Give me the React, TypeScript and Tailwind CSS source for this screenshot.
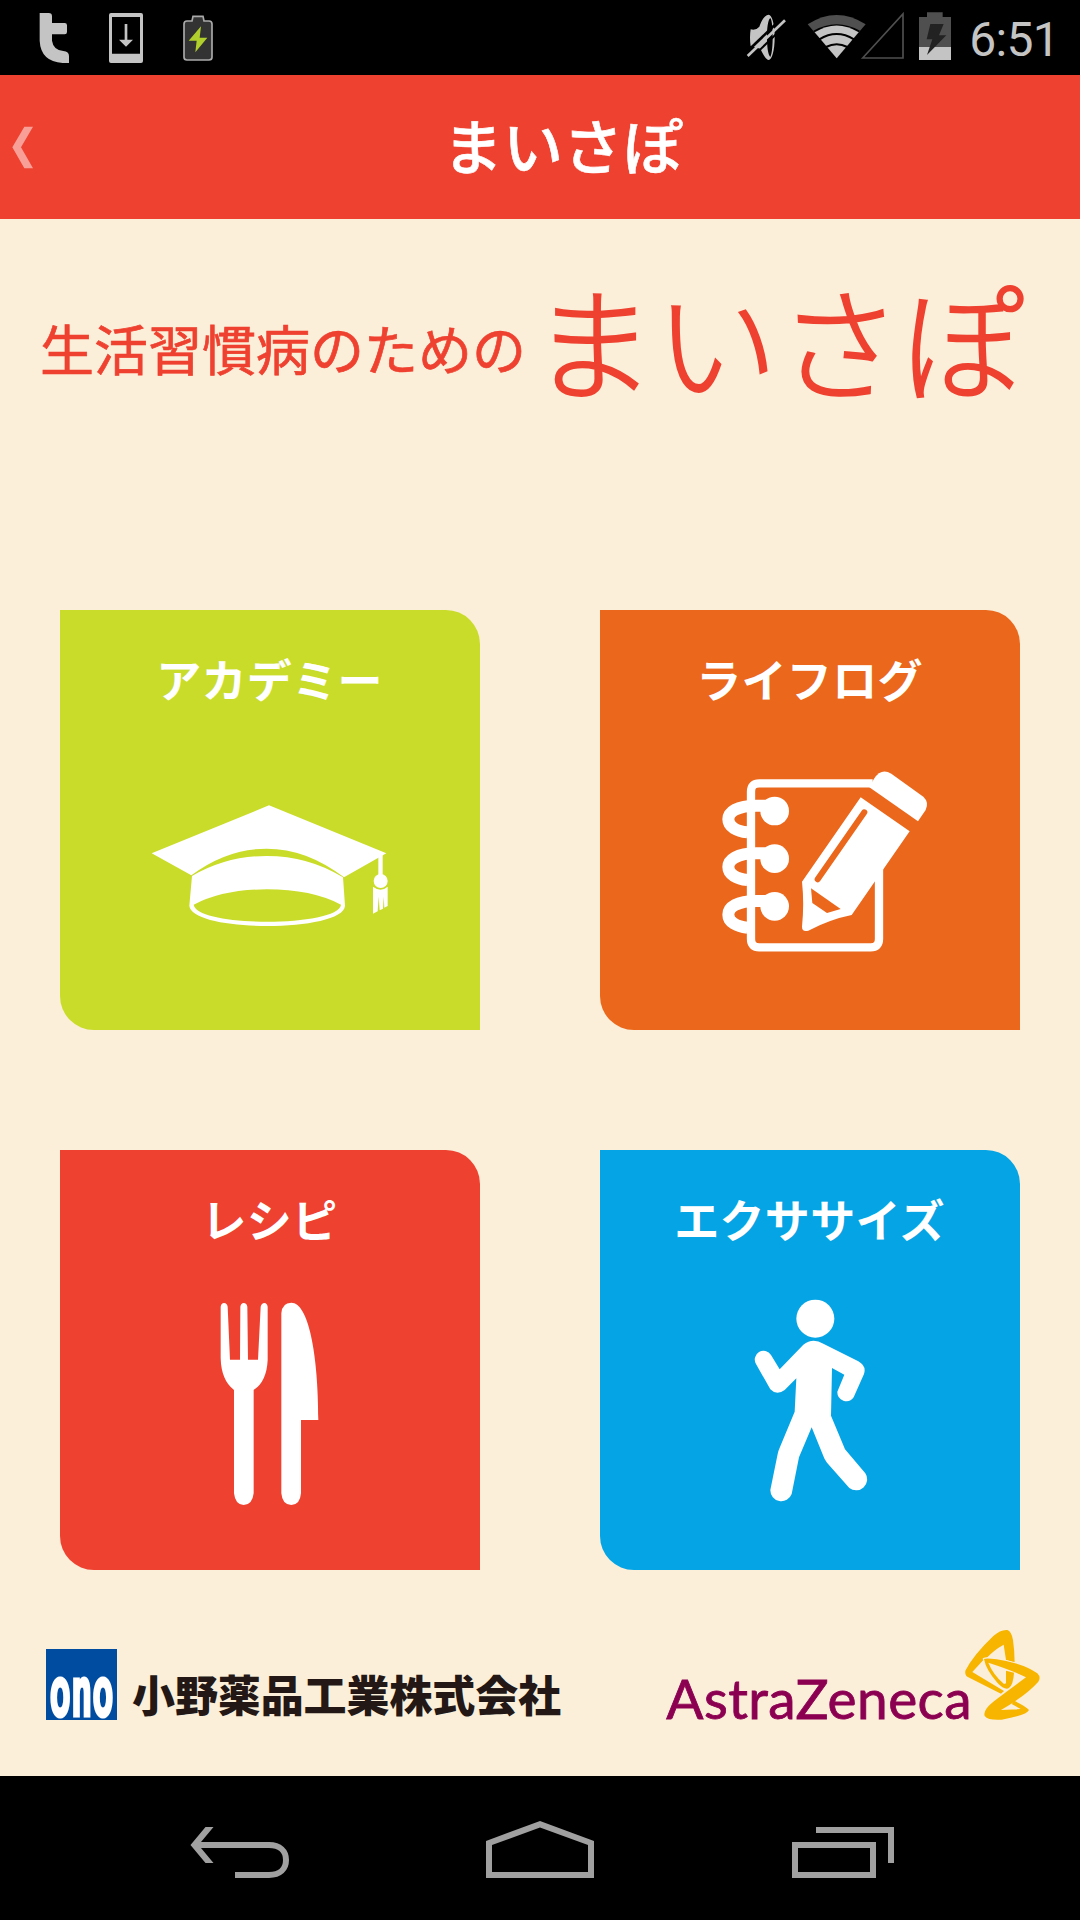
import React from "react";

const jp = "font-['Noto_Sans_CJK_JP',sans-serif]";

const StatusBar = () => {
  return (
    <div className="flex h-[75px] items-start justify-between bg-black pl-[39px] pr-[21px]">
      <div className="flex items-start pt-3">
        <svg className="h-[52px] w-[31px]" viewBox="117 36 93 156" fill="#c4c4c4">
          <path d="M119 39H146Q156 39 156 49V69H194Q201 69 201 76V96Q201 103 194 103H156V122Q160 150 190 153Q207 155 207 168V189H188Q122 184 119 122Z" />
        </svg>
        <svg className="ml-[38px] h-[52px] w-[36px]" viewBox="324 36 108 156" fill="#c4c4c4">
          <path fillRule="evenodd" d="M333 39H423Q429 39 429 45V183Q429 189 423 189H333Q327 189 327 183V45Q327 39 333 39ZM336 51V161H420V51Z" />
          <path d="M374 72H382V119H399L378 140L357 119H374Z" />
        </svg>
        <svg className="ml-[39px] h-[52px] w-[31px]" viewBox="549 36 93 156">
          <path d="M561 63H576L579 49H609L612 63H627Q636 63 636 72V172Q636 180 627 180H561Q552 180 552 172V72Q552 63 561 63Z" fill="#333" stroke="#aaa" strokeWidth="5" />
          <path d="M603 79L566 122H590L586 157L622 113H599Z" fill="#b0cf2c" />
        </svg>
      </div>
      <div className="flex items-start pt-[10px]">
        <svg className="h-[52px] w-[41px]" viewBox="78 30 123 156">
          <path fillRule="evenodd" d="M146 44C156 44 164 72 164 112S156 180 146 180C136 178 128 160 121 146L92 138Q88 112 92 88Q108 92 118 80C124 62 134 44 146 44ZM151 54C143 60 141 88 141 112S143 164 151 171C157 160 158 130 158 112S157 62 151 54Z" fill="#c4c4c4" />
          <path d="M76 160L190 50" stroke="#000" strokeWidth="8" />
          <path d="M92 176L204 68" stroke="#000" strokeWidth="6" />
          <path d="M83 168L195 61" stroke="#c4c4c4" strokeWidth="8" />
        </svg>
        <svg className="ml-5 h-[52px] w-[60px]" viewBox="261 30 180 156">
          <path d="M263 73Q350 17 437 73L350 175Z" fill="#4f4f4f" />
          <path d="M280 92Q350 53 420 92L350 175Z" fill="#000" />
          <path d="M284 97Q350 56 416 97L350 175Z" fill="#c4c4c4" />
          <path d="M298 118Q350 86 402 118M318 141Q350 124 382 141" fill="none" stroke="#000" strokeWidth="6" />
        </svg>
        <svg className="-ml-[7px] h-[52px] w-[45px]" viewBox="420 30 135 156">
          <path d="M428 174L549 42V174Z" fill="none" stroke="#4f4f4f" strokeWidth="5" />
        </svg>
        <svg className="ml-[13px] h-[52px] w-[34px]" viewBox="594 30 102 156">
          <path d="M597 51H621V37H668V51H693V141H597Z" fill="#4f4f4f" />
          <path d="M597 141H693V180H597Z" fill="#c4c4c4" />
          <path d="M631 72H671L657 106H679L621 165L637 118H620Z" fill="#222" />
        </svg>
        <span className="ml-[17px] mt-px font-[Roboto,sans-serif] text-[48px] leading-[58px] tracking-[-0.7px] text-[#c4c4c4]">6:51</span>
      </div>
    </div>
  );
};

const Header = () => {
  return (
    <div className="flex h-36 items-center bg-[#ef4130]">
      <div className="w-[46px] pl-[12px]">
        <svg className="h-[43px] w-[22px]" viewBox="37 376 66 129">
          <path d="M38 440L74 378H100L64 440L100 503H74Z" fill="#f8a098" />
        </svg>
      </div>
      <h1 className={`${jp} mb-[6px] flex-1 text-center text-[60px] font-medium leading-[60px] text-white [-webkit-text-stroke:0.6px]`}>
        まいさぽ
      </h1>
    </div>
  );
};

const AcademyIcon = () => (
  <>
    <path d="M305 760L657 616L1009 760L882 832Q770 746 650 746Q530 746 424 826Z" />
    <path fillRule="evenodd" d="M426 828Q530 768 650 768Q775 768 879 832L885 917C880 998 425 998 418 917ZM431 914C440 982 865 982 873 914Q785 868 650 868Q520 868 431 914Z" />
    <path d="M985 762H998V830H985Z" />
    <circle cx="992" cy="843" r="21" />
    <path d="M969 860Q992 878 1013 860V918L1003 923L1001 890L999 926L989 931L986 890L983 934L969 941Z" />
  </>
);

const LifelogIcon = () => (
  <>
    <path d="M848 550H508Q483 550 483 575V1017Q483 1042 508 1042H842Q867 1042 867 1017V800" fill="none" stroke="#fff" strokeWidth="25" />
    {[0, 143, 286].map((y) => (
      <g key={y} transform={`translate(0 ${y})`}>
        <path d="M540 617H500C440 617 415 636 415 658C415 680 440 694 472 697" fill="none" stroke="#fff" strokeWidth="36" />
        <circle cx="554" cy="633" r="43" />
      </g>
    ))}
    <path d="M838 562L852 536Q874 502 904 521L1000 590Q1018 607 1007 630L984 664Z" />
    <path d="M812 592L959 694L880 808L785 945Q720 958 655 992Q636 997 636 980Q643 910 636 845Z" />
    <path d="M823 637L683 838" stroke="#eb671b" strokeWidth="18" strokeLinecap="round" />
    <path d="M663 865L752 927L711 939L667 909Z" fill="#eb671b" />
  </>
);

const RecipeIcon = () => (
  <>
    <path d="M512 500Q514 489 522 489Q531 489 533 500L540 659H570L571 500Q573 489 581 489Q590 489 592 500L594 659H624L632 500Q635 489 643 489Q651 489 653 500V660Q650 725 611 750V1060Q607 1095 581 1095Q556 1095 552 1060V750Q514 722 512 655Z" />
    <path d="M694 520Q696 488 724 488C775 488 805 640 805 840H753V1060Q750 1095 724 1095Q697 1095 694 1060Z" />
  </>
);

const ExerciseIcon = () => (
  <>
    <circle cx="676" cy="536" r="57" />
    <path d="M640 614Q668 592 700 611L805 664Q830 678 822 702L791 772A27 27 0 0 1 742 755L763 704L726 684L723 827L765 928L826 1000A33 33 0 0 1 778 1044L711 968Q703 958 700 948L665 862L627 952L605 1062A33 33 0 0 1 541 1050L563 942Q565 932 570 921L614 815L619 715L584 750Q560 768 541 748L498 672A26 26 0 0 1 543 645L569 688Z" />
  </>
);

const menus = [
  { label: "アカデミー", color: "bg-[#c9dc2a]", icon: <AcademyIcon /> },
  { label: "ライフログ", color: "bg-[#eb671b]", icon: <LifelogIcon /> },
  { label: "レシピ", color: "bg-[#ef4130]", icon: <RecipeIcon /> },
  { label: "エクササイズ", color: "bg-[#05a4e5]", icon: <ExerciseIcon /> },
];

const MenuCard = ({ label, color, icon }: any) => {
  return (
    <button className={`${color} flex h-[420px] w-[420px] flex-col rounded-bl-[34px] rounded-tr-[34px]`}>
      <span className={`${jp} h-[110px] w-full pr-[1px] pt-[46px] text-center text-[45px] font-bold leading-[45px] tracking-[0.3px] text-white`}>
        {label}
      </span>
      <svg className="h-[310px] w-[420px]" viewBox="30 360 1260 930" fill="#fff">
        {icon}
      </svg>
    </button>
  );
};

const Footer = () => {
  return (
    <div className="flex h-[206px] items-start justify-between pl-[46px] pr-[39px]">
      <div className="flex pt-[79px]">
        <svg className="h-[71px] w-[71px] overflow-visible" viewBox="0 0 71 71">
          <rect width="71" height="71" fill="#004ca0" />
          <text
            transform="translate(3.500 66.500) scale(0.530 1)"
            fill="#fff"
            stroke="#fff"
            strokeWidth="3"
            fontFamily="DejaVu Sans Mono, monospace"
            fontWeight="700"
            fontSize="67"
          >
            ono
          </text>
        </svg>
        <span className={`${jp} ml-[15px] mt-[23px] whitespace-nowrap text-[43px] font-black leading-[43px] tracking-[-0.1px] text-[#231815]`}>
          小野薬品工業株式会社
        </span>
      </div>
      <div className="flex pt-[58px]">
        <span className="mt-[37px] font-[Lato,sans-serif] text-[55px] leading-[66px] tracking-[0.4px] text-[#8c0052] [-webkit-text-stroke:0.8px]">
          AstraZeneca
        </span>
        <svg className="-ml-[8px] h-[94px] w-[77px]" viewBox="972 54 231 282" fill="#f7b500">
          <path d="M976 182Q1000 135 1060 78Q1082 58 1102 60Q1114 63 1119 90Q1124 125 1124 158L1098 150L1091 104Q1062 120 1042 142L1028 152L997 186L1092 243L1083 251L982 200Q974 194 976 182Z" />
          <path
            d="M1032 147Q1038 143 1070 148Q1150 160 1192 190Q1204 202 1195 215Q1160 255 1083 300L1142 297L1115 282L1124 273Q1160 290 1167 300Q1160 316 1085 329Q1045 332 1034 318Q1028 300 1060 275Q1100 245 1158 202Q1120 182 1045 158Q1060 195 1092 222L1098 220V182L1122 188Q1120 225 1106 235Q1092 240 1072 218Q1038 180 1032 147Z"
            stroke="#fcefda"
            strokeWidth="7"
            paintOrder="stroke"
          />
        </svg>
      </div>
    </div>
  );
};

const NavBar = () => {
  return (
    <div className="flex h-36 items-start justify-between bg-black pl-[190px] pr-[186px] pt-[44px]">
      <svg className="h-[60px] w-[100px]" viewBox="190 1820 100 60" fill="none" stroke="#a0a0a0">
        <path d="M196 1845H269C280 1845 286 1851 286 1860S280 1875 269 1875H235" strokeWidth="6" />
        <path d="M190.500 1845L205.500 1827H213.500L198.500 1845L213.500 1863H205.500Z" fill="#a0a0a0" stroke="none" />
      </svg>
      <svg className="-ml-[2px] h-[60px] w-[108px]" viewBox="486 1820 108 60">
        <path fillRule="evenodd" d="M486 1841L540 1821L594 1841V1878H486ZM492 1845V1872H588V1845L540 1827.500Z" fill="#a0a0a0" />
      </svg>
      <svg className="h-[60px] w-[102px]" viewBox="792 1820 102 60" fill="none" stroke="#a0a0a0" strokeWidth="6">
        <path d="M795 1845H873V1875H795Z" />
        <path d="M816 1830H891V1863" />
      </svg>
    </div>
  );
};

export default function App() {
  return (
    <div className="flex h-[1920px] w-[1080px] flex-col overflow-hidden bg-[#fcefda]">
      <StatusBar />
      <Header />
      <div className={`${jp} flex h-[391px] items-start whitespace-nowrap pl-10 text-[#ef4130]`}>
        <span className="mt-[102px] text-[54px] leading-[54px] [-webkit-text-stroke:0.7px]">生活習慣病のための</span>
        <span className="ml-[6px] mt-[57px] text-[123px] font-light leading-[123px] [-webkit-text-stroke:1.8px]">まいさぽ</span>
      </div>
      <div className="grid grid-cols-[420px_420px] gap-[120px] pl-[60px]">
        {menus.map((menu) => (
          <MenuCard key={menu.label} {...menu} />
        ))}
      </div>
      <Footer />
      <NavBar />
    </div>
  );
}
